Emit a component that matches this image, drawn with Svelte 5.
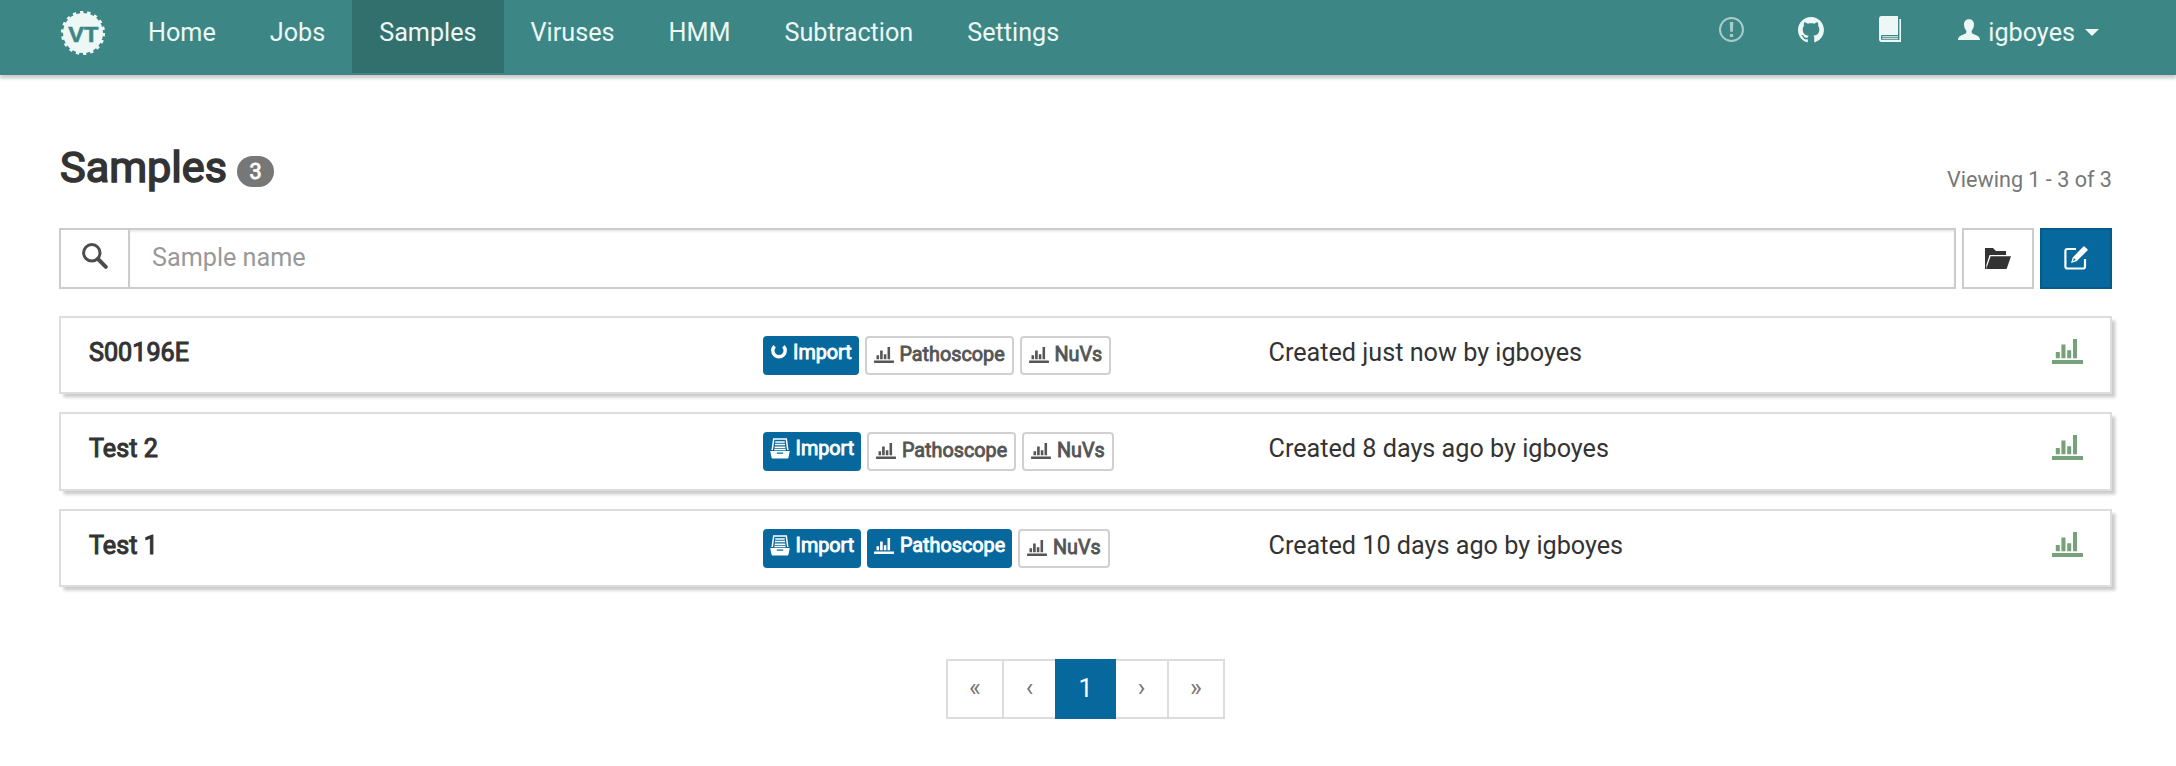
<script>
  const links = ['Home', 'Jobs', 'Samples', 'Viruses', 'HMM', 'Subtraction', 'Settings'];
  const active = 'Samples';

  const samples = [
    { name: 'S00196E', imported: 'busy', pathoscope: false, nuvs: false, created: 'Created just now by igboyes' },
    { name: 'Test 2', imported: 'done', pathoscope: false, nuvs: false, created: 'Created 8 days ago by igboyes' },
    { name: 'Test 1', imported: 'done', pathoscope: true, nuvs: false, created: 'Created 10 days ago by igboyes' }
  ];
  const pages = ['«', '‹', '1', '›', '»'];
</script>

{#snippet chart()}
  <svg class="chart" viewBox="0 0 31 25" fill="currentColor">
    <path d="M0 21h31v4H0zM3.8 13h4v6.2h-4zM9.4 5.4h4.1v13.8H9.4zM15.2 11.3h4v7.9h-4zM21 0h4v19.2h-4z" />
  </svg>
{/snippet}

{#snippet label(text, filled, icon)}
  <span class="label" class:filled>
    {#if icon === 'busy'}
      <svg class="spinner" viewBox="0 0 17 17" fill="none" stroke="currentColor" stroke-width="3.4"><path d="M4.600 3.200A6.200 6.200 0 1 0 13.400 3.200" /></svg>
    {:else if icon === 'done'}
      <svg class="archive" viewBox="0 0 20 21">
        <path d="M2.2 12 3.7 1h12.6l1.5 11" fill="none" stroke="currentColor" stroke-width="1.5" />
        <path d="M5.2 4h9.6M4.9 6.6h10.2M4.6 9.2h10.8M4.3 11.6h11.4" fill="none" stroke="currentColor" stroke-width="1.5" />
        <path fill="currentColor" fill-rule="evenodd" d="M.2 13h19.6l-1.3 6.6q-.2 1-1.2 1H2.7q-1 0-1.2-1zM6.8 14.6v1.2h6.4v-1.2z" />
      </svg>
    {:else}
      {@render chart()}
    {/if}
    <span>{text}</span>
  </span>
{/snippet}

<div class="page">
  <nav>
    <svg class="logo" viewBox="0 0 44 44">
      <circle cx="22" cy="22" r="20" fill="#edf7f6" />
      <circle cx="22" cy="22" r="20.6" fill="none" stroke="#edf7f6" stroke-width="3" stroke-dasharray="3.3 3.891" />
      <text x="22.3" y="31" text-anchor="middle" textLength="30" lengthAdjust="spacingAndGlyphs">VT</text>
    </svg>
    {#each links as l}
      <a class:active={l === active} href="#top">{l}</a>
    {/each}
    <div class="tools">
      <svg class="alert" viewBox="0 0 25 25"><circle cx="12.5" cy="12.5" r="11.5" fill="none" stroke="currentColor" stroke-width="2" /><path fill="currentColor" d="M10.8 5h3.5l-.4 9.700h-2.700zM10.900 17.100h3.200V20h-3.200z" /></svg>
      <svg class="github" viewBox="0 0 16 16" fill="currentColor"><path d="M8 0C3.58 0 0 3.58 0 8c0 3.54 2.29 6.53 5.47 7.59.4.07.55-.17.55-.38 0-.19-.01-.82-.01-1.49-2.01.37-2.53-.49-2.69-.94-.09-.23-.48-.94-.82-1.13-.28-.15-.68-.52-.01-.53.63-.01 1.08.58 1.23.82.72 1.21 1.87.87 2.33.66.07-.52.28-.87.51-1.07-1.78-.2-3.64-.89-3.64-3.95 0-.87.31-1.59.82-2.15-.08-.2-.36-1.02.08-2.12 0 0 .67-.21 2.2.82.64-.18 1.32-.27 2-.27s1.36.09 2 .27c1.53-1.04 2.2-.82 2.2-.82.44 1.1.16 1.92.08 2.12.51.56.82 1.27.82 2.15 0 3.07-1.87 3.75-3.65 3.95.29.25.54.73.54 1.48 0 1.07-.01 1.93-.01 2.2 0 .21.15.46.55.38A8.01 8.01 0 0 0 16 8c0-4.42-3.58-8-8-8z" /></svg>
      <svg class="book" viewBox="0 0 22 26"><path fill="currentColor" d="M2.6 0H19v19H3Q2 19 2 20.2v2.6q0 1.2 1 1.2h17.4V3H22v23H2.6Q0 26 0 23V3Q0 0 2.6 0z" /><path fill="currentColor" d="M3.2 20.2H19v1H3.2zM3.2 22.2H19v1H3.2z" /></svg>
      <svg class="user" viewBox="0 0 22 22"><path fill="currentColor" d="M11 .2c3 0 5 2 5 5.2 0 2.600-1 4.800-2.300 6v1.900c0 1 .8 1.500 2.200 2 3.500 1.100 6 2.600 6.100 5.700H0c.1-3.100 2.600-4.600 6.100-5.700 1.400-.5 2.200-1 2.200-2v-1.900C7 10.200 6 8 6 5.400 6 2.200 8 .2 11 .2z" /></svg>
      <span>igboyes</span>
      <i class="caret"></i>
    </div>
  </nav>

  <main>
    <header>
      <h1>Samples</h1>
      <span class="badge">3</span>
      <span class="viewing">Viewing 1 - 3 of 3</span>
    </header>

    <div class="toolbar">
      <div class="addon">
        <svg viewBox="0 0 26 26" fill="none" stroke="#4d4d4d"><circle cx="9.8" cy="9.8" r="8.2" stroke-width="3" /><path d="m16 16 7.800 7.800" stroke-width="4" stroke-linecap="round" /></svg>
      </div>
      <div class="input">Sample name</div>
      <button aria-label="Open">
        <svg class="folder" viewBox="0 0 26 21" fill="#333"><path d="M0 0h8l3 3h10v4H4.600L1.400 16.500V21H0z" /><path d="M5.600 8.300H26L21.600 21H1.200z" /></svg>
      </button>
      <button class="primary" aria-label="Create">
        <svg class="edit" viewBox="0 0 24 24"><path d="M12 3H3.500Q1.400 3 1.400 5v15.500q0 2 2 2H19q2 0 2-2V13" fill="none" stroke="#fff" stroke-width="2.200" /><path fill="#fff" fill-rule="evenodd" d="M20.600.5 23.500 3.300q.5.700-.1 1.300L12.600 15.300 7 17l1.700-5.600L19.400.6q.6-.5 1.200-.1zM9.900 12.100l-.8 2.800 2.600-.9z" /></svg>
      </button>
    </div>

    <div class="rows">
      {#each samples as s}
        <div class="row">
          <strong>{s.name}</strong>
          <div class="labels">
            {@render label('Import', true, s.imported)}
            {@render label('Pathoscope', s.pathoscope, 'chart')}
            {@render label('NuVs', s.nuvs, 'chart')}
          </div>
          <span class="created">{s.created}</span>
          <div class="status">{@render chart()}</div>
        </div>
      {/each}
    </div>

    <div class="pagination">
      {#each pages as p}
        <span class:current={p === '1'}>{p}</span>
      {/each}
    </div>
  </main>
</div>

<style>
  :global(body) { background: #fff; }
  .page { font: 25.2px/36px Roboto, sans-serif; color: #333; height: 766px; overflow: hidden; }
  .page * { box-sizing: border-box; }
  svg { display: block; flex: none; }

  nav { display: flex; height: 75px; padding-left: 61px; background: #3c8785; color: #edf7f6; box-shadow: 0 3.6px 3px rgba(0, 0, 0, 0.2); }
  .logo { width: 44px; height: 44px; margin: 11px 16px 0 0; }
  .logo text { font: bold 22.5px "Liberation Sans", sans-serif; fill: #3c8785; stroke: #3c8785; stroke-width: 0.6px; }
  nav a { height: 73px; padding: 14px 27px 0; line-height: 37px; color: inherit; text-decoration: none; }
  nav a.active { background: #32706e; }
  .tools { display: flex; margin-left: auto; padding-right: 77px; line-height: 37px; }
  .tools span { margin-top: 14px; }
  .alert { width: 25px; height: 25px; margin: 16.5px 54px 0 0; opacity: 0.62; }
  .github { width: 26px; height: 26px; margin: 16.5px 55px 0 0; }
  .book { width: 22px; height: 26px; margin: 16px 57px 0 0; }
  .user { width: 22px; height: 22px; margin: 18.5px 8px 0 0; }
  .caret { width: 0; height: 0; margin: 29px 0 0 10px; border: 7.2px solid transparent; border-top-color: currentColor; border-bottom: 0; }

  main { padding: 0 64px 0 59px; }
  header { display: flex; align-items: baseline; height: 153px; padding-top: 63px; }
  h1 { margin: 0; font-size: 43.2px; line-height: 60px; font-weight: 400; -webkit-text-stroke: 1.6px; padding-left: 1px; }
  .badge { width: 37px; height: 31px; margin-left: 10px; border-radius: 16px; background: #777; color: #fff; font-size: 21.6px; line-height: 31px; text-align: center; -webkit-text-stroke: 0.9px; transform: translateY(-3px); }
  .viewing { margin-left: auto; font-size: 21.6px; color: #777; transform: translateY(5px); }

  .toolbar { display: flex; height: 61px; }
  .addon { width: 71px; border: 2px solid #ccc; padding: 13px 0 0 21px; }
  .addon svg { width: 26px; height: 26px; }
  .input { flex: 1; margin-left: -2px; border: 2px solid #ccc; padding: 10px 22px 0; color: #999; box-shadow: inset 0 2px 2px rgba(0, 0, 0, 0.075); }
  button { display: flex; align-items: center; justify-content: center; width: 72px; margin: 0 0 0 6px; padding: 0; border: 2px solid #ccc; background: #fff; }
  .folder { width: 26px; height: 21px; }
  .edit { width: 24px; height: 24px; margin-top: -2px; }
  .primary { border-color: #065a87; background: #07689d; }

  .rows { display: flex; flex-direction: column; gap: 18px; margin-top: 27px; }
  .row { display: flex; height: 78.4px; border: 2px solid #ddd; padding: 0 27px 0 28px; box-shadow: 3.6px 3.6px 3px rgba(0, 0, 0, 0.2); }
  strong { width: 674px; padding-top: 17px; font-weight: 400; -webkit-text-stroke: 1.05px; }
  .labels { display: flex; gap: 6px; width: 505.5px; padding-top: 18px; }
  .label { display: flex; align-items: flex-start; gap: 5.5px; height: 39px; padding: 4px 7.2px 0 7px; border: 2px solid #d0d0d0; border-radius: 4px; color: #555; font-size: 19.8px; line-height: 26px; -webkit-text-stroke: 0.85px; }
  .label.filled { border: 0; padding-top: 4px; color: #fff; background: #07689d; }
  .label .chart { width: 20px; height: 16px; margin-top: 5px; }
  .label.filled .chart { margin-top: 5px; }
  .label .spinner { width: 17px; height: 17px; margin-top: 3px; margin-right: 0.5px; }
  .archive { width: 20px; height: 21px; margin-top: 2px; }
  .created { padding-top: 17px; }
  .status { margin-left: auto; padding-top: 21px; color: #76a17a; }
  .status .chart { width: 31px; height: 25px; }

  .pagination { display: flex; width: 279px; height: 60px; margin: 72px 0 0 887px; }
  .pagination span { width: 58px; border: 2px solid #ddd; color: #777; text-align: center; line-height: 54px; }
  .pagination span + span { margin-left: -2px; }
  .pagination span:nth-child(2), .pagination span:nth-child(4) { width: 55px; }
  .pagination .current { z-index: 1; width: 61px; line-height: 56px; border-color: #07689d; background: #07689d; color: #fff; }
  .pagination span:nth-child(5) { width: 58px; }
</style>
